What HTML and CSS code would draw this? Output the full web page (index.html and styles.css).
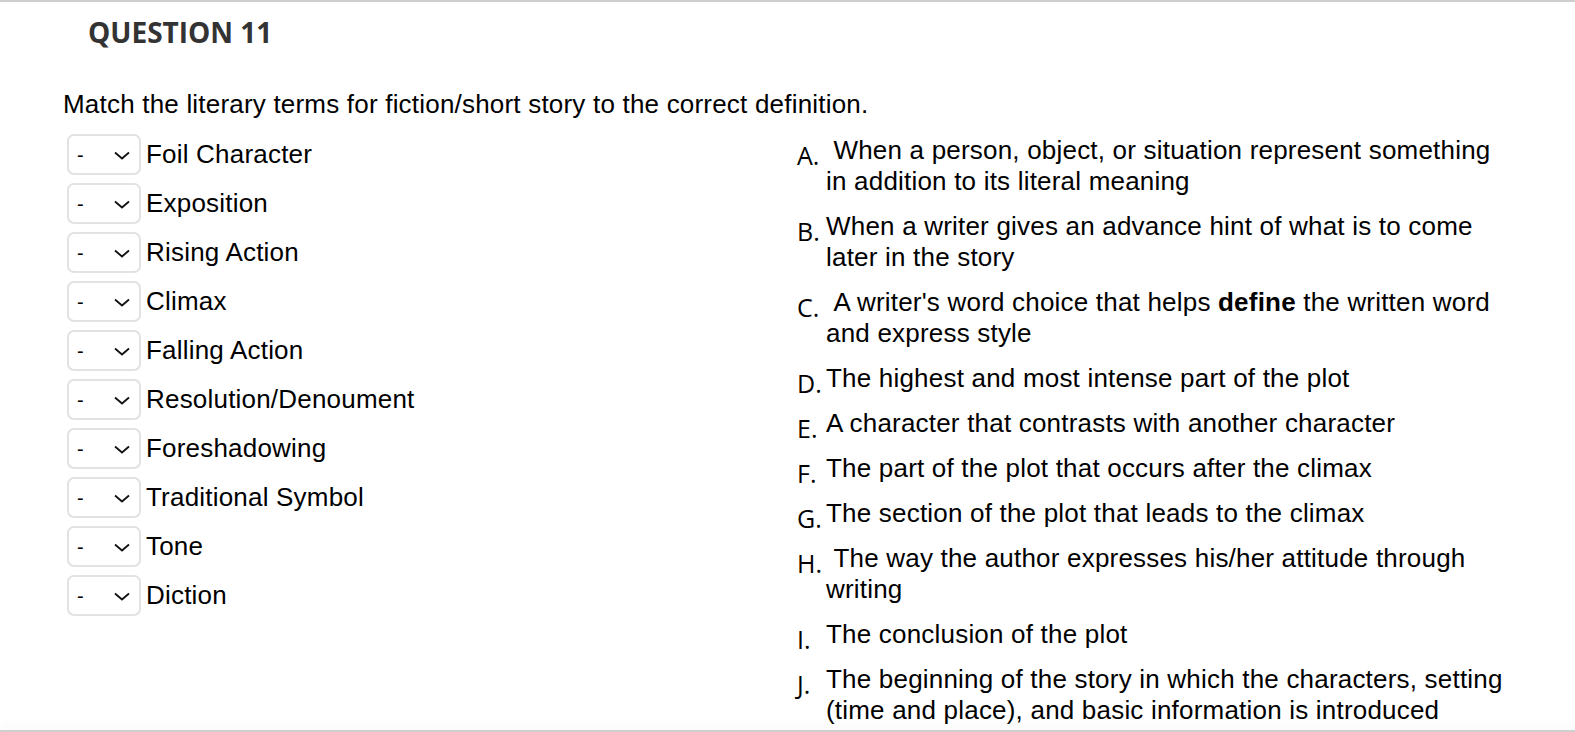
FILE: index.html
```html
<!DOCTYPE html>
<html lang="en">
<head>
  <meta charset="UTF-8" />
  <meta name="viewport" content="width=device-width, initial-scale=1.0" />
  <title>Question 11</title>
  <link rel="stylesheet" href="styles.css">
</head>
<body>
  <div class="page">
    <h2 class="question-title">QUESTION 11</h2>

    <p class="prompt">Match the literary terms for fiction/short story to the correct definition.</p>

    <div class="match">
      <div class="terms">
        <div class="term">
          <span class="select-wrap">
            <select><option>-</option><option>A</option><option>B</option><option>C</option><option>D</option><option>E</option><option>F</option><option>G</option><option>H</option><option>I</option><option>J</option></select>
            <svg class="chevron" viewBox="0 0 18 9" width="18" height="9"><path d="M2 1.5l7 6 7-6" fill="none" stroke="#111" stroke-width="1.8"/></svg>
          </span>
          <span class="term-label">Foil Character</span>
        </div>
        <div class="term">
          <span class="select-wrap">
            <select><option>-</option><option>A</option><option>B</option><option>C</option><option>D</option><option>E</option><option>F</option><option>G</option><option>H</option><option>I</option><option>J</option></select>
            <svg class="chevron" viewBox="0 0 18 9" width="18" height="9"><path d="M2 1.5l7 6 7-6" fill="none" stroke="#111" stroke-width="1.8"/></svg>
          </span>
          <span class="term-label">Exposition</span>
        </div>
        <div class="term">
          <span class="select-wrap">
            <select><option>-</option><option>A</option><option>B</option><option>C</option><option>D</option><option>E</option><option>F</option><option>G</option><option>H</option><option>I</option><option>J</option></select>
            <svg class="chevron" viewBox="0 0 18 9" width="18" height="9"><path d="M2 1.5l7 6 7-6" fill="none" stroke="#111" stroke-width="1.8"/></svg>
          </span>
          <span class="term-label">Rising Action</span>
        </div>
        <div class="term">
          <span class="select-wrap">
            <select><option>-</option><option>A</option><option>B</option><option>C</option><option>D</option><option>E</option><option>F</option><option>G</option><option>H</option><option>I</option><option>J</option></select>
            <svg class="chevron" viewBox="0 0 18 9" width="18" height="9"><path d="M2 1.5l7 6 7-6" fill="none" stroke="#111" stroke-width="1.8"/></svg>
          </span>
          <span class="term-label">Climax</span>
        </div>
        <div class="term">
          <span class="select-wrap">
            <select><option>-</option><option>A</option><option>B</option><option>C</option><option>D</option><option>E</option><option>F</option><option>G</option><option>H</option><option>I</option><option>J</option></select>
            <svg class="chevron" viewBox="0 0 18 9" width="18" height="9"><path d="M2 1.5l7 6 7-6" fill="none" stroke="#111" stroke-width="1.8"/></svg>
          </span>
          <span class="term-label">Falling Action</span>
        </div>
        <div class="term">
          <span class="select-wrap">
            <select><option>-</option><option>A</option><option>B</option><option>C</option><option>D</option><option>E</option><option>F</option><option>G</option><option>H</option><option>I</option><option>J</option></select>
            <svg class="chevron" viewBox="0 0 18 9" width="18" height="9"><path d="M2 1.5l7 6 7-6" fill="none" stroke="#111" stroke-width="1.8"/></svg>
          </span>
          <span class="term-label">Resolution/Denoument</span>
        </div>
        <div class="term">
          <span class="select-wrap">
            <select><option>-</option><option>A</option><option>B</option><option>C</option><option>D</option><option>E</option><option>F</option><option>G</option><option>H</option><option>I</option><option>J</option></select>
            <svg class="chevron" viewBox="0 0 18 9" width="18" height="9"><path d="M2 1.5l7 6 7-6" fill="none" stroke="#111" stroke-width="1.8"/></svg>
          </span>
          <span class="term-label">Foreshadowing</span>
        </div>
        <div class="term">
          <span class="select-wrap">
            <select><option>-</option><option>A</option><option>B</option><option>C</option><option>D</option><option>E</option><option>F</option><option>G</option><option>H</option><option>I</option><option>J</option></select>
            <svg class="chevron" viewBox="0 0 18 9" width="18" height="9"><path d="M2 1.5l7 6 7-6" fill="none" stroke="#111" stroke-width="1.8"/></svg>
          </span>
          <span class="term-label">Traditional Symbol</span>
        </div>
        <div class="term">
          <span class="select-wrap">
            <select><option>-</option><option>A</option><option>B</option><option>C</option><option>D</option><option>E</option><option>F</option><option>G</option><option>H</option><option>I</option><option>J</option></select>
            <svg class="chevron" viewBox="0 0 18 9" width="18" height="9"><path d="M2 1.5l7 6 7-6" fill="none" stroke="#111" stroke-width="1.8"/></svg>
          </span>
          <span class="term-label">Tone</span>
        </div>
        <div class="term">
          <span class="select-wrap">
            <select><option>-</option><option>A</option><option>B</option><option>C</option><option>D</option><option>E</option><option>F</option><option>G</option><option>H</option><option>I</option><option>J</option></select>
            <svg class="chevron" viewBox="0 0 18 9" width="18" height="9"><path d="M2 1.5l7 6 7-6" fill="none" stroke="#111" stroke-width="1.8"/></svg>
          </span>
          <span class="term-label">Diction</span>
        </div>
      </div>

      <ol class="answers">
        <li><span class="letter">A.</span><span class="answer-text">&nbsp;When a person, object, or situation represent something in addition to its literal meaning</span></li>
        <li><span class="letter">B.</span><span class="answer-text">When a writer gives an advance hint of what is to come later in the story</span></li>
        <li><span class="letter">C.</span><span class="answer-text">&nbsp;A writer's word choice that helps <strong>define</strong> the written word and express style</span></li>
        <li><span class="letter">D.</span><span class="answer-text">The highest and most intense part of the plot</span></li>
        <li><span class="letter">E.</span><span class="answer-text">A character that contrasts with another character</span></li>
        <li><span class="letter">F.</span><span class="answer-text">The part of the plot that occurs after the climax</span></li>
        <li><span class="letter">G.</span><span class="answer-text">The section of the plot that leads to the climax</span></li>
        <li><span class="letter">H.</span><span class="answer-text">&nbsp;The way the author expresses his/her attitude through writing</span></li>
        <li><span class="letter">I.</span><span class="answer-text">The conclusion of the plot</span></li>
        <li><span class="letter">J.</span><span class="answer-text">The beginning of the story in which the characters, setting (time and place), and basic information is introduced</span></li>
      </ol>
    </div>
  </div>
  <div class="bottom-edge"></div>
</body>
</html>
```

FILE: styles.css
```css
:root {
  --text: #000;
  --heading: #333;
  --border: #e2e2e2;
  --rule: #cfcfcf;
}

html, body {
  height: 100%;
}

body {
  margin: 0;
  font-family: "Liberation Sans", Arial, sans-serif;
  color: var(--text);
  background: #fff;
  overflow: hidden;
  position: relative;
}

.page {
  border-top: 2px solid var(--rule);
  padding: 0 0 0 63px;
}

.question-title {
  font-family: "Open Sans", sans-serif;
  font-weight: 700;
  font-size: 28px;
  color: var(--heading);
  margin: 13px 0 0 25px;
  line-height: 34px;
}

.prompt {
  font-size: 26px;
  letter-spacing: 0.2px;
  line-height: 31px;
  margin: 40px 0 14px;
}

.match {
  display: flex;
}

.terms {
  width: 730px;
  display: flex;
  flex-direction: column;
  gap: 8px;
  padding-left: 4px;
}

.term {
  display: flex;
  align-items: center;
  gap: 5px;
}

.select-wrap {
  position: relative;
  display: inline-block;
}

.select-wrap select {
  appearance: none;
  -webkit-appearance: none;
  width: 74px;
  height: 41px;
  border: 2px solid var(--border);
  border-radius: 7px;
  background: #fff;
  font-family: "Liberation Sans", Arial, sans-serif;
  font-size: 20px;
  color: #000;
  padding: 0 0 0 8px;
  display: block;
}

.select-wrap .chevron {
  position: absolute;
  right: 10px;
  top: 17px;
  pointer-events: none;
}

.term-label {
  font-size: 26px;
  letter-spacing: 0.2px;
}

.answers {
  list-style: none;
  margin: 1px 0 0;
  padding: 0;
  width: 720px;
  display: flex;
  flex-direction: column;
  gap: 14px;
}

.answers li {
  display: flex;
  align-items: flex-start;
}

.letter {
  font-family: "Open Sans", sans-serif;
  font-size: 25px;
  width: 29px;
  flex: none;
  line-height: 31px;
  padding-top: 5px;
  margin-bottom: -5px;
}

.answer-text {
  font-size: 26px;
  letter-spacing: 0.2px;
  line-height: 31px;
  width: 690px;
}

.bottom-edge {
  position: absolute;
  left: 0;
  right: 0;
  bottom: 0;
  height: 2px;
  background: var(--rule);
  box-shadow: 0 -4px 8px rgba(0, 0, 0, 0.08);
}
```
